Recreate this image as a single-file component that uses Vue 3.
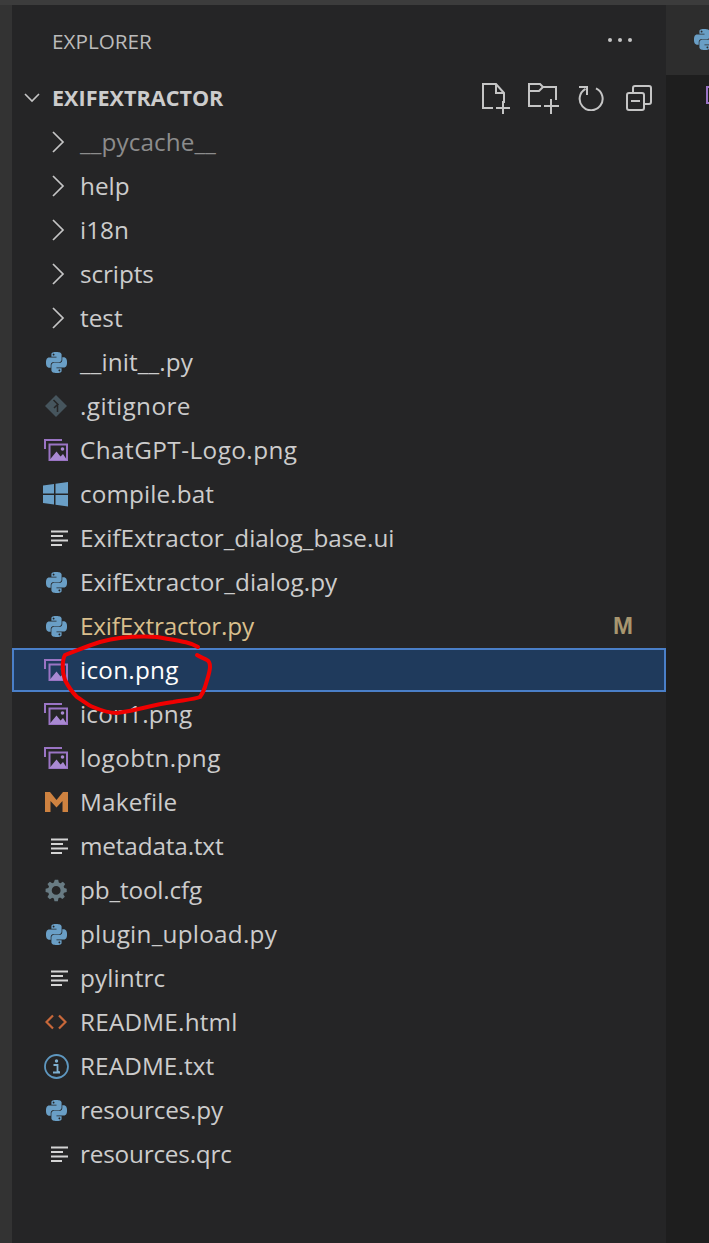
<script setup>
const rows = [
  { name: '__pycache__', icon: 'chevron', cls: 'muted', ls: 0.1 },
  { name: 'help', icon: 'chevron' },
  { name: 'i18n', icon: 'chevron' },
  { name: 'scripts', icon: 'chevron', ls: -0.1 },
  { name: 'test', icon: 'chevron' },
  { name: '__init__.py', icon: 'python', ls: 0.1 },
  { name: '.gitignore', icon: 'git', ls: 0.4 },
  { name: 'ChatGPT-Logo.png', icon: 'image', ls: 0.45 },
  { name: 'compile.bat', icon: 'windows', ls: 0.1 },
  { name: 'ExifExtractor_dialog_base.ui', icon: 'lines' },
  { name: 'ExifExtractor_dialog.py', icon: 'python', ls: 0.05 },
  { name: 'ExifExtractor.py', icon: 'python', cls: 'modified', badge: 'M', ls: -0.2 },
  { name: 'icon.png', icon: 'image', cls: 'selected', ls: 0.25 },
  { name: 'icon1.png', icon: 'image', ls: 0.2 },
  { name: 'logobtn.png', icon: 'image', ls: 0.4 },
  { name: 'Makefile', icon: 'make', ls: 0.2 },
  { name: 'metadata.txt', icon: 'lines', ls: -0.15 },
  { name: 'pb_tool.cfg', icon: 'gear', ls: -0.15 },
  { name: 'plugin_upload.py', icon: 'python', ls: 0.25 },
  { name: 'pylintrc', icon: 'lines', ls: 0.1 },
  { name: 'README.html', icon: 'code', ls: 0.2 },
  { name: 'README.txt', icon: 'info', ls: 0.1 },
  { name: 'resources.py', icon: 'python', ls: -0.15 },
  { name: 'resources.qrc', icon: 'lines', ls: -0.2 },
]
const py = 'M14.25.18l.9.2.73.26.59.3.45.32.34.34.25.34.16.33.1.3.04.26.02.2-.01.13V8.5l-.05.63-.13.55-.21.46-.26.38-.3.31-.33.25-.35.19-.35.14-.33.1-.3.07-.26.04-.21.02H8.77l-.69.05-.59.14-.5.22-.41.27-.33.32-.27.35-.2.36-.15.37-.1.35-.07.32-.04.27-.02.21v3.06H3.17l-.21-.03-.28-.07-.32-.12-.35-.18-.36-.26-.36-.36-.35-.46-.32-.59-.28-.73-.21-.88-.14-1.05-.05-1.23.06-1.22.16-1.04.24-.87.32-.71.36-.57.4-.44.42-.33.42-.24.4-.16.36-.1.32-.05.24-.01h.16l.06.01h8.16v-.83H6.18l-.01-2.75-.02-.37.05-.34.11-.31.17-.28.25-.26.31-.23.38-.2.44-.18.51-.15.58-.12.64-.1.71-.06.77-.04.84-.02 1.27.05zm-6.3 1.98l-.23.33-.08.41.08.41.23.34.33.22.41.09.41-.09.33-.22.23-.34.08-.41-.08-.41-.23-.33-.33-.22-.41-.09-.41.09zm13.09 3.95l.28.06.32.12.35.18.36.27.36.35.35.47.32.59.28.73.21.88.14 1.04.05 1.23-.06 1.23-.16 1.04-.24.86-.32.71-.36.57-.4.45-.42.33-.42.24-.4.16-.36.09-.32.05-.24.02-.16-.01h-8.22v.82h5.84l.01 2.76.02.36-.05.34-.11.31-.17.29-.25.25-.31.24-.38.2-.44.17-.51.15-.58.13-.64.09-.71.07-.77.04-.84.01-1.27-.04-1.07-.14-.9-.2-.73-.25-.59-.3-.45-.33-.34-.34-.25-.34-.16-.33-.1-.3-.04-.25-.02-.2.01-.13v-5.34l.05-.64.13-.54.21-.46.26-.38.3-.32.33-.24.35-.2.35-.14.33-.1.3-.06.26-.04.21-.02.13-.01h5.84l.69-.05.59-.14.5-.21.41-.28.33-.32.27-.35.2-.36.15-.36.1-.35.07-.32.04-.28.02-.21V6.07h2.09l.14.01zm-6.47 14.25l-.23.33-.08.41.08.41.23.33.33.23.41.08.41-.08.33-.23.23-.33.08-.41-.08-.41-.23-.33-.33-.23-.41-.08-.41.08z'
const gear = 'M11 1h4l.7 3.2 1.9.8 2.8-1.8 2.8 2.8-1.8 2.8.8 1.9L25 11.4v4l-3.2.7-.8 1.9 1.8 2.8-2.8 2.8-2.8-1.8-1.9.8L14.6 26h-4l-.7-3.2-1.9-.8-2.8 1.8-2.8-2.8L4.2 18l-.8-1.9L.2 15.4v-4l3.2-.7.8-1.9L2.4 6l2.8-2.8L8 5l1.9-.8zM12.6 8.2a5.2 5.2 0 1 0 0 10.4 5.2 5.2 0 0 0 0-10.4z'
</script>

<template>
  <div class="window">
    <div class="titlebar"></div>
    <div class="body">
      <div class="activity"></div>
      <aside class="sidebar">
        <header class="title">
          <span>EXPLORER</span>
          <div class="dots"><i></i><i></i><i></i></div>
        </header>
        <div class="root">
          <svg class="root-chev" width="16" height="10" viewBox="0 0 16 10"><path d="M1 1l7 7 7-7" fill="none" stroke="#c5c5c5" stroke-width="1.6"/></svg>
          <strong>EXIFEXTRACTOR</strong>
          <div class="actions">
            <svg width="28" height="31" viewBox="0 0 28 31" fill="none" stroke="#c5c5c5" stroke-width="2"><path d="M11 25H1V1h13l8 9v10M14 1v9h8M21 18v13M14 25h14"/></svg>
            <svg width="32" height="31" viewBox="0 0 32 31" fill="none" stroke="#c5c5c5" stroke-width="2"><path d="M13 23H1V1h11l3 3h13v13M1 8h10l4-4M23 16v15M16 23h15"/></svg>
            <svg width="26" height="26" viewBox="0 0 26 26" fill="none" stroke="#c5c5c5" stroke-width="2"><path d="M7.5 3.8a11.5 11.5 0 1 0 10.5-.4M1 2h8v8"/></svg>
            <svg class="collapse" width="26" height="26" viewBox="0 0 26 26" fill="none" stroke="#c5c5c5" stroke-width="2"><rect x="1" y="8" width="17" height="17" rx="2"/><path d="M7 8V3a2 2 0 0 1 2-2h14a2 2 0 0 1 2 2v14a2 2 0 0 1-2 2h-5M5 16h9"/></svg>
          </div>
        </div>
        <ul class="tree">
          <li v-for="r in rows" :key="r.name" class="row" :class="r.cls">
            <span class="slot">
              <svg v-if="r.icon === 'chevron'" class="chev" width="14" height="24" viewBox="0 0 14 24"><path d="M2 2l10 10L2 22" fill="none" stroke="#c5c5c5" stroke-width="1.7"/></svg>
              <svg v-else-if="r.icon === 'python'" class="python" width="21" height="21" viewBox="0 0 24 24"><path :d="py" fill="#6a9fc6"/></svg>
              <svg v-else-if="r.icon === 'git'" width="22" height="22" viewBox="0 0 22 22"><path d="M11 0l11 11-11 11L0 11z" fill="#46555d"/><path d="M8.5 5l5 5M12.5 9v8M12.5 9.5L9 13" stroke="#252526" stroke-width="1.5" fill="none"/></svg>
              <svg v-else-if="r.icon === 'image'" width="24" height="22" viewBox="0 0 24 22"><path d="M1 10V1h17" fill="none" stroke="#9a74c4" stroke-width="2"/><rect x="5.5" y="5.5" width="17.5" height="15.5" fill="none" stroke="#9a74c4" stroke-width="2"/><circle cx="18.5" cy="10" r="1.8" fill="#a989d2"/><path d="M5.5 21l7-8.5 4 5 2.5-2.5 4 6z" fill="#a989d2"/></svg>
              <svg v-else-if="r.icon === 'windows'" width="26" height="26" viewBox="0 0 26 26"><path d="M0 4.5l11-1.5v9.5H0zM12.5 2.8L25 1v11.5H12.5zM0 14h11v9.5L0 22zM12.5 14H25v11.5l-12.5-1.7z" fill="#6a9fc6"/></svg>
              <svg v-else-if="r.icon === 'lines'" class="lines" width="18" height="16" viewBox="0 0 18 16"><path d="M0 1.5h17M0 6h12M0 10.5h17M0 15h11" stroke="#d4d4d4" stroke-width="2" fill="none"/></svg>
              <svg v-else-if="r.icon === 'make'" width="23" height="20" viewBox="0 0 23 20"><path d="M0 20V0h5l6.5 8L18 0h5v20h-5.5V9l-6 6.500-6-6.500v11z" fill="#ce8240"/></svg>
              <svg v-else-if="r.icon === 'gear'" width="23" height="23" viewBox="0 0 26 27"><path :d="gear" fill="#687b83" fill-rule="evenodd"/></svg>
              <svg v-else-if="r.icon === 'code'" width="22" height="16" viewBox="0 0 22 16"><path d="M8 1.500L1.500 8 8 14.500M14 1.500L20.500 8 14 14.500" fill="none" stroke="#c8683a" stroke-width="2.2"/></svg>
              <svg v-else-if="r.icon === 'info'" width="25" height="25" viewBox="0 0 25 25"><circle cx="12.500" cy="12.500" r="11.500" fill="none" stroke="#5e97bf" stroke-width="1.800"/><circle cx="12.500" cy="7" r="1.700" fill="#7fb0d0"/><path d="M9.500 11h4v7h2M9 18.500h7" fill="none" stroke="#7fb0d0" stroke-width="1.800"/></svg>
            </span>
            <span class="name" :style="{ letterSpacing: (r.ls || 0) + 'px' }">{{ r.name }}</span>
            <span v-if="r.badge" class="badge">{{ r.badge }}</span>
          </li>
        </ul>
        <svg class="scribble" width="709" height="1243" viewBox="0 0 709 1243"><path d="M198 647C190 642 180 641 157 637C140 636 123 636 100 642C90 645 78 650 65 655C62 660 62 672 65 680C68 686 72 692 77 697C82 700 88 705 93 707C100 710 108 713 117 713C125 712 135 710 143 708C155 705 165 703 173 702C185 700 195 699 200 697C203 693 204 690 205 687C207 680 210 672 210 667C210 663 209 661 207 660C203 658 200 657 197 655" fill="none" stroke="#f00000" stroke-width="4" stroke-linecap="round"/></svg>
      </aside>
      <main class="editor">
        <div class="tab"><svg width="21" height="21" viewBox="0 0 24 24"><path :d="py" fill="#6a9fc6"/></svg></div>
        <div class="crumb"></div>
      </main>
    </div>
  </div>
</template>

<style scoped>
.window { width: 709px; height: 1243px; background: #333; overflow: hidden; font-family: "Open Sans", "Noto Sans", sans-serif; }
.titlebar { height: 5px; background: #3c3c3c; }
.body { display: flex; height: 1238px; }
.activity { width: 12px; background: #333; flex: none; }
.sidebar { width: 654px; flex: none; background: #252526; color: #ccc; }
.title { height: 71px; box-sizing: border-box; padding: 22px 34px 0 40px; display: flex; justify-content: space-between; font-size: 20.7px; line-height: 28px; color: #bbb; }
.dots { display: flex; gap: 6px; padding-top: 11px; }
.dots i { width: 4px; height: 4px; border-radius: 50%; background: #c5c5c5; }
.root { height: 44px; display: flex; align-items: center; position: relative; font-size: 21.6px; }
.root-chev { margin-left: 12px; }
.root strong { margin: -2px 0 0 12px; font-weight: 700; color: #ccc; }
.actions { margin-left: auto; margin-right: 14px; display: flex; align-items: center; gap: 18px; }
.collapse { margin-left: 4px; }
.tree { list-style: none; margin: 0; padding: 0; }
.row { height: 44px; box-sizing: border-box; display: flex; align-items: center; font-size: 24.3px; padding-left: 31px; padding-right: 33px; }
.slot { width: 26px; height: 26px; margin-right: 11px; display: flex; align-items: center; justify-content: center; flex: none; }
.chev { margin-left: 4px; }
.lines { margin-left: 8px; }
.name { white-space: nowrap; line-height: 44px; }
.muted .name { color: #8c8c8c; }
.modified .name { color: #d9bf8c; }
.badge { margin-left: auto; color: #a8966f; font-family: "Liberation Sans", sans-serif; font-weight: 700; font-size: 24px; }
.selected { background: #1f3a5c; outline: 2.5px solid #4a7fc8; outline-offset: -2.5px; }
.selected .name { color: #fff; }
.scribble { position: absolute; left: 0; top: 0; pointer-events: none; }
.editor { flex: 1; min-width: 0; background: #1e1e1e; overflow: hidden; }
.tab { height: 70px; background: #2d2d2d; padding: 24px 0 0 28px; box-sizing: border-box; }
.crumb { width: 20px; height: 14px; margin: 11px 0 0 40px; border: 2px solid #9a74c4; }
</style>
